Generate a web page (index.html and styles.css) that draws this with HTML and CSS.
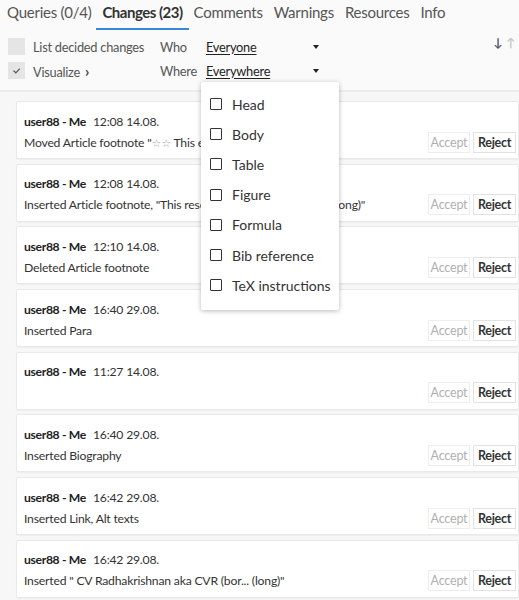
FILE: index.html
```html
<!DOCTYPE html>
<html>
<head>
<meta charset="utf-8">
<link rel="stylesheet" href="styles.css">
</head>
<body>
<div class="header">
  <div class="tabs">
    <div class="tab">Queries (0/4)</div>
    <div class="tab active">Changes (23)</div>
    <div class="tab">Comments</div>
    <div class="tab">Warnings</div>
    <div class="tab">Resources</div>
    <div class="tab">Info</div>
  </div>
  <div class="filters">
    <div class="frow">
      <span class="cb"></span>
      <span class="flabel">List decided changes</span>
      <span class="fkey">Who</span>
      <span class="fval">Everyone</span>
      <span class="caret"></span>
      <span class="sort"><span class="down">↓</span><span class="up">↑</span></span>
    </div>
    <div class="frow">
      <span class="cb checked"><svg viewBox="0 0 17 17" width="17" height="17"><path d="M5.5 8.6 L7.8 10.8 L11.8 6.6" fill="none" stroke="#555" stroke-width="1.2"/></svg></span>
      <span class="flabel">Visualize <span class="chev">›</span></span>
      <span class="fkey">Where</span>
      <span class="fval">Everywhere</span>
      <span class="caret"></span>
    </div>
  </div>
</div>
<div class="list">
  <div class="card">
    <div class="meta"><b>user88 - Me</b><span class="time">12:08 14.08.</span></div>
    <div class="body"><span class="desc">Moved Article footnote "<span class="star">☆☆</span> This element... (long)"</span><span class="btn accept">Accept</span><span class="btn reject">Reject</span></div>
  </div>
  <div class="card">
    <div class="meta"><b>user88 - Me</b><span class="time">12:08 14.08.</span></div>
    <div class="body"><span class="desc">Inserted Article footnote, "This research was supported by... (long)"</span><span class="btn accept">Accept</span><span class="btn reject">Reject</span></div>
  </div>
  <div class="card">
    <div class="meta"><b>user88 - Me</b><span class="time">12:10 14.08.</span></div>
    <div class="body"><span class="desc">Deleted Article footnote</span><span class="btn accept">Accept</span><span class="btn reject">Reject</span></div>
  </div>
  <div class="card">
    <div class="meta"><b>user88 - Me</b><span class="time">16:40 29.08.</span></div>
    <div class="body"><span class="desc">Inserted Para</span><span class="btn accept">Accept</span><span class="btn reject">Reject</span></div>
  </div>
  <div class="card">
    <div class="meta"><b>user88 - Me</b><span class="time">11:27 14.08.</span></div>
    <div class="body"><span class="desc"></span><span class="btn accept">Accept</span><span class="btn reject">Reject</span></div>
  </div>
  <div class="card">
    <div class="meta"><b>user88 - Me</b><span class="time">16:40 29.08.</span></div>
    <div class="body"><span class="desc">Inserted Biography</span><span class="btn accept">Accept</span><span class="btn reject">Reject</span></div>
  </div>
  <div class="card">
    <div class="meta"><b>user88 - Me</b><span class="time">16:42 29.08.</span></div>
    <div class="body"><span class="desc">Inserted Link, Alt texts</span><span class="btn accept">Accept</span><span class="btn reject">Reject</span></div>
  </div>
  <div class="card">
    <div class="meta"><b>user88 - Me</b><span class="time">16:42 29.08.</span></div>
    <div class="body"><span class="desc">Inserted " CV Radhakrishnan aka CVR (bor... (long)"</span><span class="btn accept">Accept</span><span class="btn reject">Reject</span></div>
  </div>
</div>
<div class="menu">
  <div class="mitem"><span class="mcb"></span>Head</div>
  <div class="mitem"><span class="mcb"></span>Body</div>
  <div class="mitem"><span class="mcb"></span>Table</div>
  <div class="mitem"><span class="mcb"></span>Figure</div>
  <div class="mitem"><span class="mcb"></span>Formula</div>
  <div class="mitem"><span class="mcb"></span>Bib reference</div>
  <div class="mitem"><span class="mcb"></span>TeX instructions</div>
</div>
</body>
</html>
```
FILE: styles.css
```css
html, body {
  margin: 0;
  padding: 0;
}
body {
  font-family: Lato, "Noto Sans", sans-serif;
  background: #f7f7f7;
  color: #333;
  width: 519px;
  height: 600px;
  overflow: hidden;
  position: relative;
}
.header {
  background: #fafafa;
  border-bottom: 2px solid #ececec;
  height: 92px;
  box-sizing: border-box;
}
.tabs {
  display: flex;
  padding-left: 1px;
  height: 30px;
}
.tab {
  font-size: 15px;
  letter-spacing: -0.25px;
  color: #555;
  padding: 3px 6px 0;
  height: 26px;
  box-sizing: border-box;
  line-height: 18px;
  margin-right: -1px;
}
.tab.active {
  color: #333;
  font-weight: 700;
  letter-spacing: -0.5px;
  border-bottom: 2px solid #3a86d8;
  height: 30px;
}
.filters {
  padding-top: 8px;
  display: flex;
  flex-direction: column;
  gap: 7px;
}
.frow {
  display: flex;
  align-items: center;
  height: 17px;
  padding-left: 8px;
  font-size: 12.8px;
  letter-spacing: -0.25px;
  color: #555;
}
.cb {
  width: 17px;
  height: 17px;
  background: #e5e5e5;
  flex: none;
  margin-right: 8px;
  display: block;
}
.cb svg { display: block; }
.flabel {
  width: 127px;
}
.chev {
  font-weight: 700;
  font-size: 15px;
  margin-left: 2px;
  color: #444;
}
.fkey {
  width: 46px;
}
.fval {
  width: 107px;
  color: #222;
  text-decoration: underline;
  text-underline-offset: 2px;
}
.caret {
  width: 0;
  height: 0;
  border-left: 3px solid transparent;
  border-right: 3px solid transparent;
  border-top: 4px solid #222;
  margin-top: 1px;
}
.sort {
  margin-left: auto;
  margin-right: 4px;
  align-self: flex-start;
  margin-top: -3px;
  font-size: 12px;
  font-weight: 700;
  display: flex;
  gap: 4px;
}
.down { color: #4d5563; }
.up { color: #c8c8c8; }
.list {
  padding: 9px 0 0 16px;
  display: flex;
  flex-direction: column;
  gap: 4.7px;
}
.card {
  background: #fff;
  border: 1px solid #e9e9e9;
  border-radius: 2px;
  box-shadow: 0 1px 1px rgba(0,0,0,0.04);
  height: 58px;
  box-sizing: border-box;
  padding: 9px 2px 5px 7px;
  font-size: 12.2px;
  letter-spacing: -0.2px;
  color: #333;
}
.meta {
  height: 20px;
  display: flex;
  align-items: center;
}
.meta b {
  color: #222;
  font-weight: 700;
  letter-spacing: -0.35px;
}
.time {
  margin-left: 7px;
}
.body {
  height: 22px;
  display: flex;
  align-items: center;
}
.desc {
  flex: 1;
  white-space: nowrap;
  overflow: hidden;
}
.star {
  color: #aaa;
  font-family: "DejaVu Sans", sans-serif;
  font-size: 11px;
}
.btn {
  height: 21px;
  box-sizing: border-box;
  border: 1px solid #eeeeee;
  background: #fff;
  display: flex;
  align-items: center;
  justify-content: center;
  font-size: 12.5px;
}
.accept {
  width: 42px;
  color: #b0b0b0;
  margin-right: 3px;
}
.reject {
  width: 43px;
  color: #333;
  font-weight: 700;
  letter-spacing: -0.3px;
  border-color: #e2e2e2;
}
.menu {
  position: absolute;
  left: 201px;
  top: 82px;
  width: 138px;
  height: 228px;
  box-sizing: border-box;
  background: #fff;
  box-shadow: 0 1px 5px rgba(0,0,0,0.28);
  border-radius: 2px;
  padding-top: 7px;
}
.mitem {
  height: 30.2px;
  display: flex;
  align-items: center;
  padding-left: 9px;
  font-size: 14px;
  color: #333;
}
.mcb {
  width: 12px;
  height: 12px;
  box-sizing: border-box;
  border: 1.5px solid #333;
  border-radius: 1px;
  margin-right: 10px;
}
```
